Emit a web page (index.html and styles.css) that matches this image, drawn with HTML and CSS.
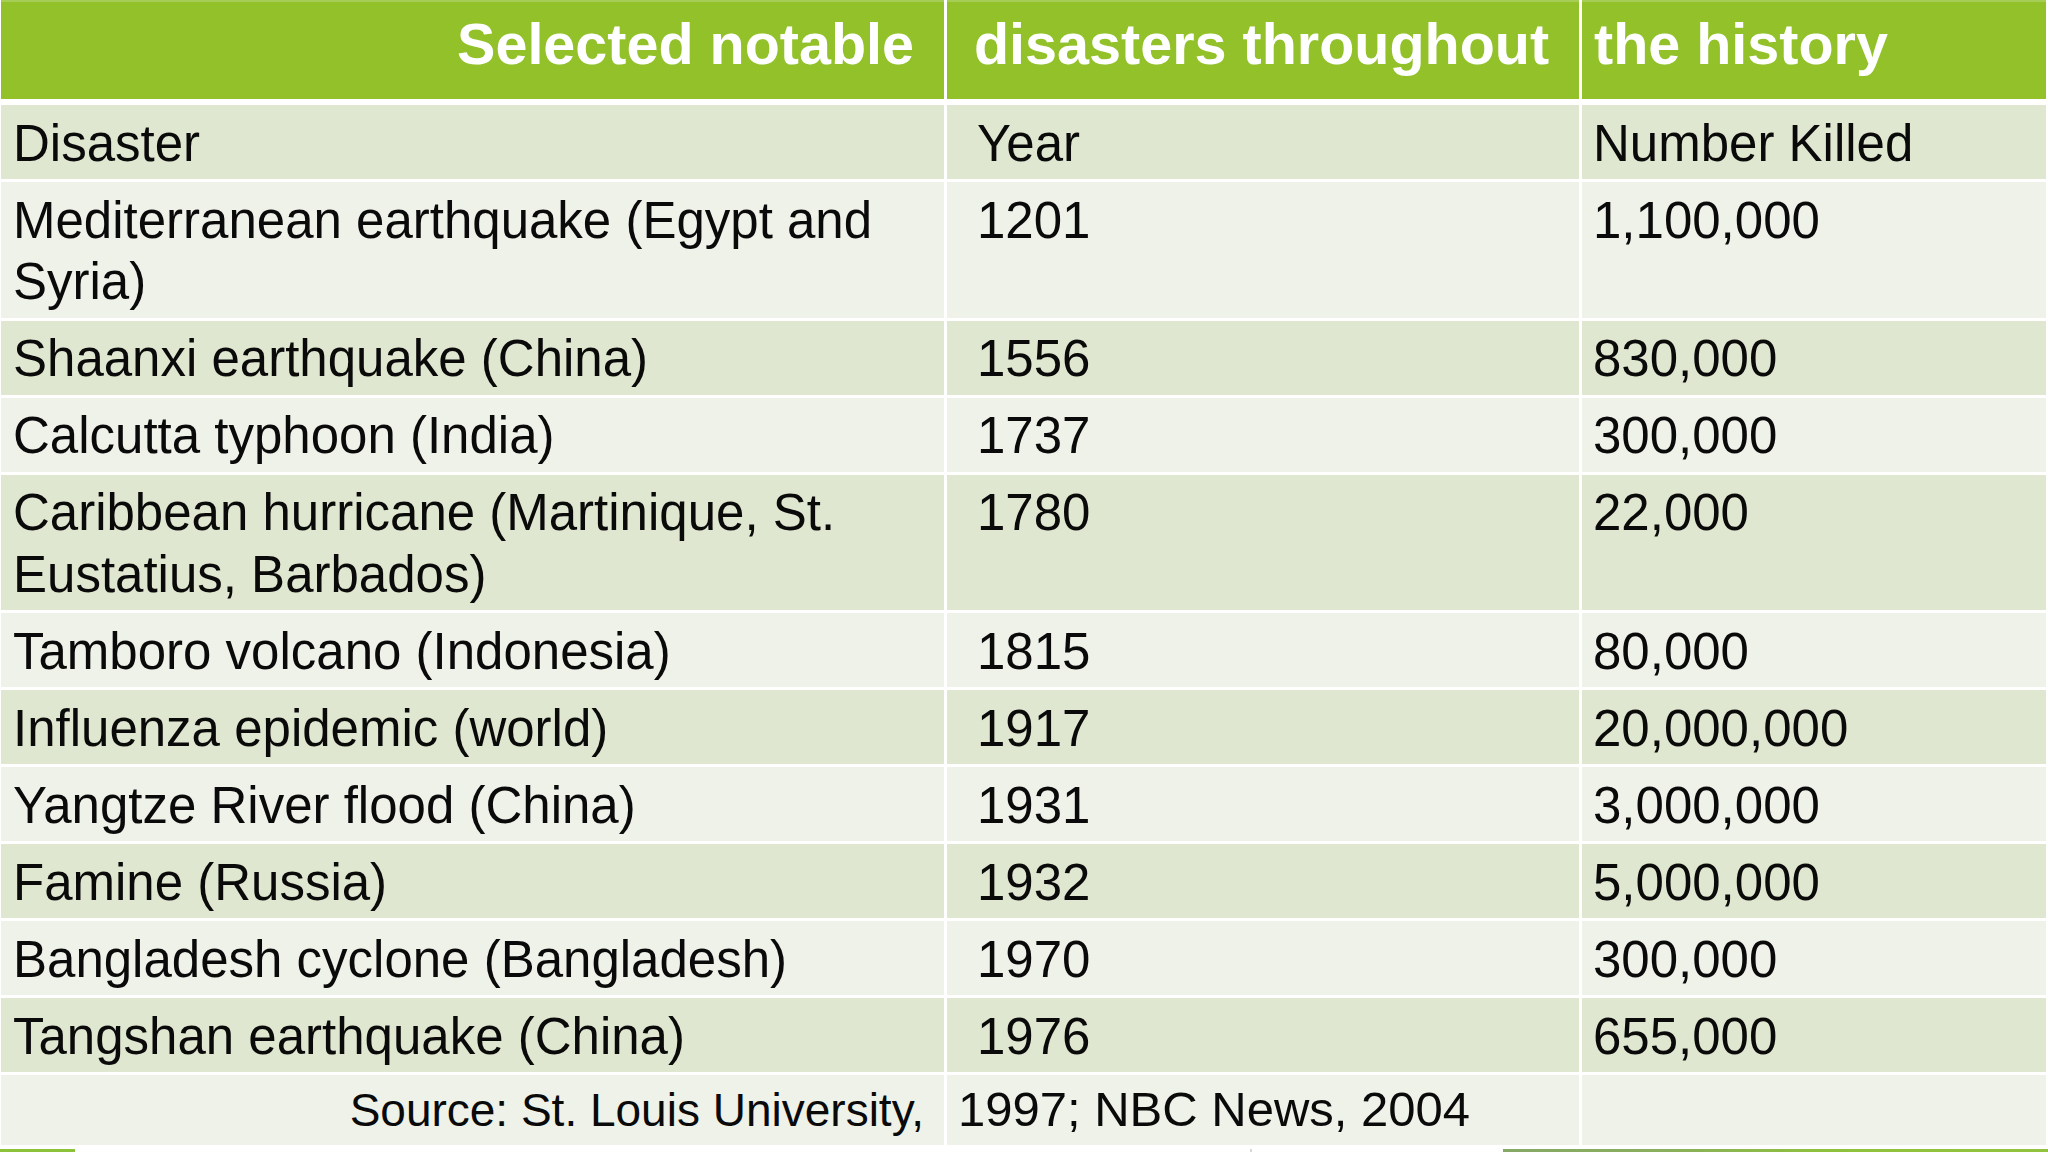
FILE: index.html
```html
<!DOCTYPE html>
<html lang="en">
<head>
<meta charset="utf-8">
<title>Selected notable disasters throughout the history</title>
<link rel="stylesheet" href="styles.css">
</head>
<body>
<div class="slide">
  <div class="table">
    <div class="row head">
      <div class="cell c1">Selected notable</div>
      <div class="cell c2">disasters throughout</div>
      <div class="cell c3">the history</div>
    </div>
    <div class="row dark">
      <div class="cell c1">Disaster</div>
      <div class="cell c2">Year</div>
      <div class="cell c3">Number Killed</div>
    </div>
    <div class="row light">
      <div class="cell c1">Mediterranean earthquake (Egypt and<br>Syria)</div>
      <div class="cell c2">1201</div>
      <div class="cell c3">1,100,000</div>
    </div>
    <div class="row dark">
      <div class="cell c1">Shaanxi earthquake (China)</div>
      <div class="cell c2">1556</div>
      <div class="cell c3">830,000</div>
    </div>
    <div class="row light">
      <div class="cell c1">Calcutta typhoon (India)</div>
      <div class="cell c2">1737</div>
      <div class="cell c3">300,000</div>
    </div>
    <div class="row dark">
      <div class="cell c1">Caribbean hurricane (Martinique, St.<br>Eustatius, Barbados)</div>
      <div class="cell c2">1780</div>
      <div class="cell c3">22,000</div>
    </div>
    <div class="row light">
      <div class="cell c1">Tamboro volcano (Indonesia)</div>
      <div class="cell c2">1815</div>
      <div class="cell c3">80,000</div>
    </div>
    <div class="row dark">
      <div class="cell c1">Influenza epidemic (world)</div>
      <div class="cell c2">1917</div>
      <div class="cell c3">20,000,000</div>
    </div>
    <div class="row light">
      <div class="cell c1">Yangtze River flood (China)</div>
      <div class="cell c2">1931</div>
      <div class="cell c3">3,000,000</div>
    </div>
    <div class="row dark">
      <div class="cell c1">Famine (Russia)</div>
      <div class="cell c2">1932</div>
      <div class="cell c3">5,000,000</div>
    </div>
    <div class="row light">
      <div class="cell c1">Bangladesh cyclone (Bangladesh)</div>
      <div class="cell c2">1970</div>
      <div class="cell c3">300,000</div>
    </div>
    <div class="row dark">
      <div class="cell c1">Tangshan earthquake (China)</div>
      <div class="cell c2">1976</div>
      <div class="cell c3">655,000</div>
    </div>
    <div class="row light source">
      <div class="cell c1">Source: St. Louis University,</div>
      <div class="cell c2">1997; NBC News, 2004</div>
      <div class="cell c3"></div>
    </div>
  </div>
  <div class="footer">
    <div class="bar-left"></div>
    <div class="slash"></div>
    <div class="bar-right"></div>
  </div>
</div>
</body>
</html>
```
FILE: styles.css
```css
html, body {
  margin: 0;
  padding: 0;
  background: #ffffff;
  overflow: hidden;
}

body {
  font-family: "Liberation Sans", Arial, sans-serif;
  color: #0a0a0a;
}

.slide {
  width: 2048px;
  height: 1152px;
  display: flex;
  flex-direction: column;
}

.table {
  display: flex;
  flex-direction: column;
  gap: 3px;
  margin-left: 1px;
  width: 2045px;
}

.row {
  display: grid;
  grid-template-columns: 943px 632px 464px;
  column-gap: 3px;
}

.cell {
  font-size: 51px;
  line-height: 61.5px;
  padding: 7.5px 10px 5px 12px;
  white-space: nowrap;
}

.row.dark .cell {
  background: #dfe7d0;
}

.row.light .cell {
  background: #eef2e9;
}

.row .c2 {
  padding-left: 30px;
}

.row .c3 {
  padding-left: 11px;
}

/* header */
.row.head {
  margin-bottom: 3px;
}

.row.head .cell {
  background: #92c12a;
  border-top: 2px solid #a6cd55;
  color: #ffffff;
  font-weight: bold;
  font-size: 57.5px;
  line-height: 70px;
  padding-top: 7px;
  padding-bottom: 20px;
}

.row.head .c1 {
  text-align: right;
  padding-right: 30px;
}

.row.head .c2 {
  padding-left: 27px;
}

.row.head .c3 {
  padding-left: 12px;
}

/* source row */
.row.source .cell {
  padding-top: 5px;
  padding-bottom: 3px;
}

.row.source .c1 {
  font-size: 46px;
  text-align: right;
  padding-right: 20px;
}

.row.source .c2 {
  font-size: 49px;
  padding-left: 11px;
  padding-top: 4px;
}

/* bottom decoration */
.footer {
  margin-top: auto;
  height: 3px;
  display: flex;
  align-items: stretch;
}

.bar-left {
  width: 75px;
  background: #8dc33a;
}

.slash {
  margin-left: 1175px;
  width: 2px;
  background: #d8d8d8;
}

.bar-right {
  margin-left: auto;
  width: 545px;
  background: linear-gradient(90deg, #86a866 0%, #8aaf5c 30%, #8fc23c 60%, #93c33e 100%);
}
```
